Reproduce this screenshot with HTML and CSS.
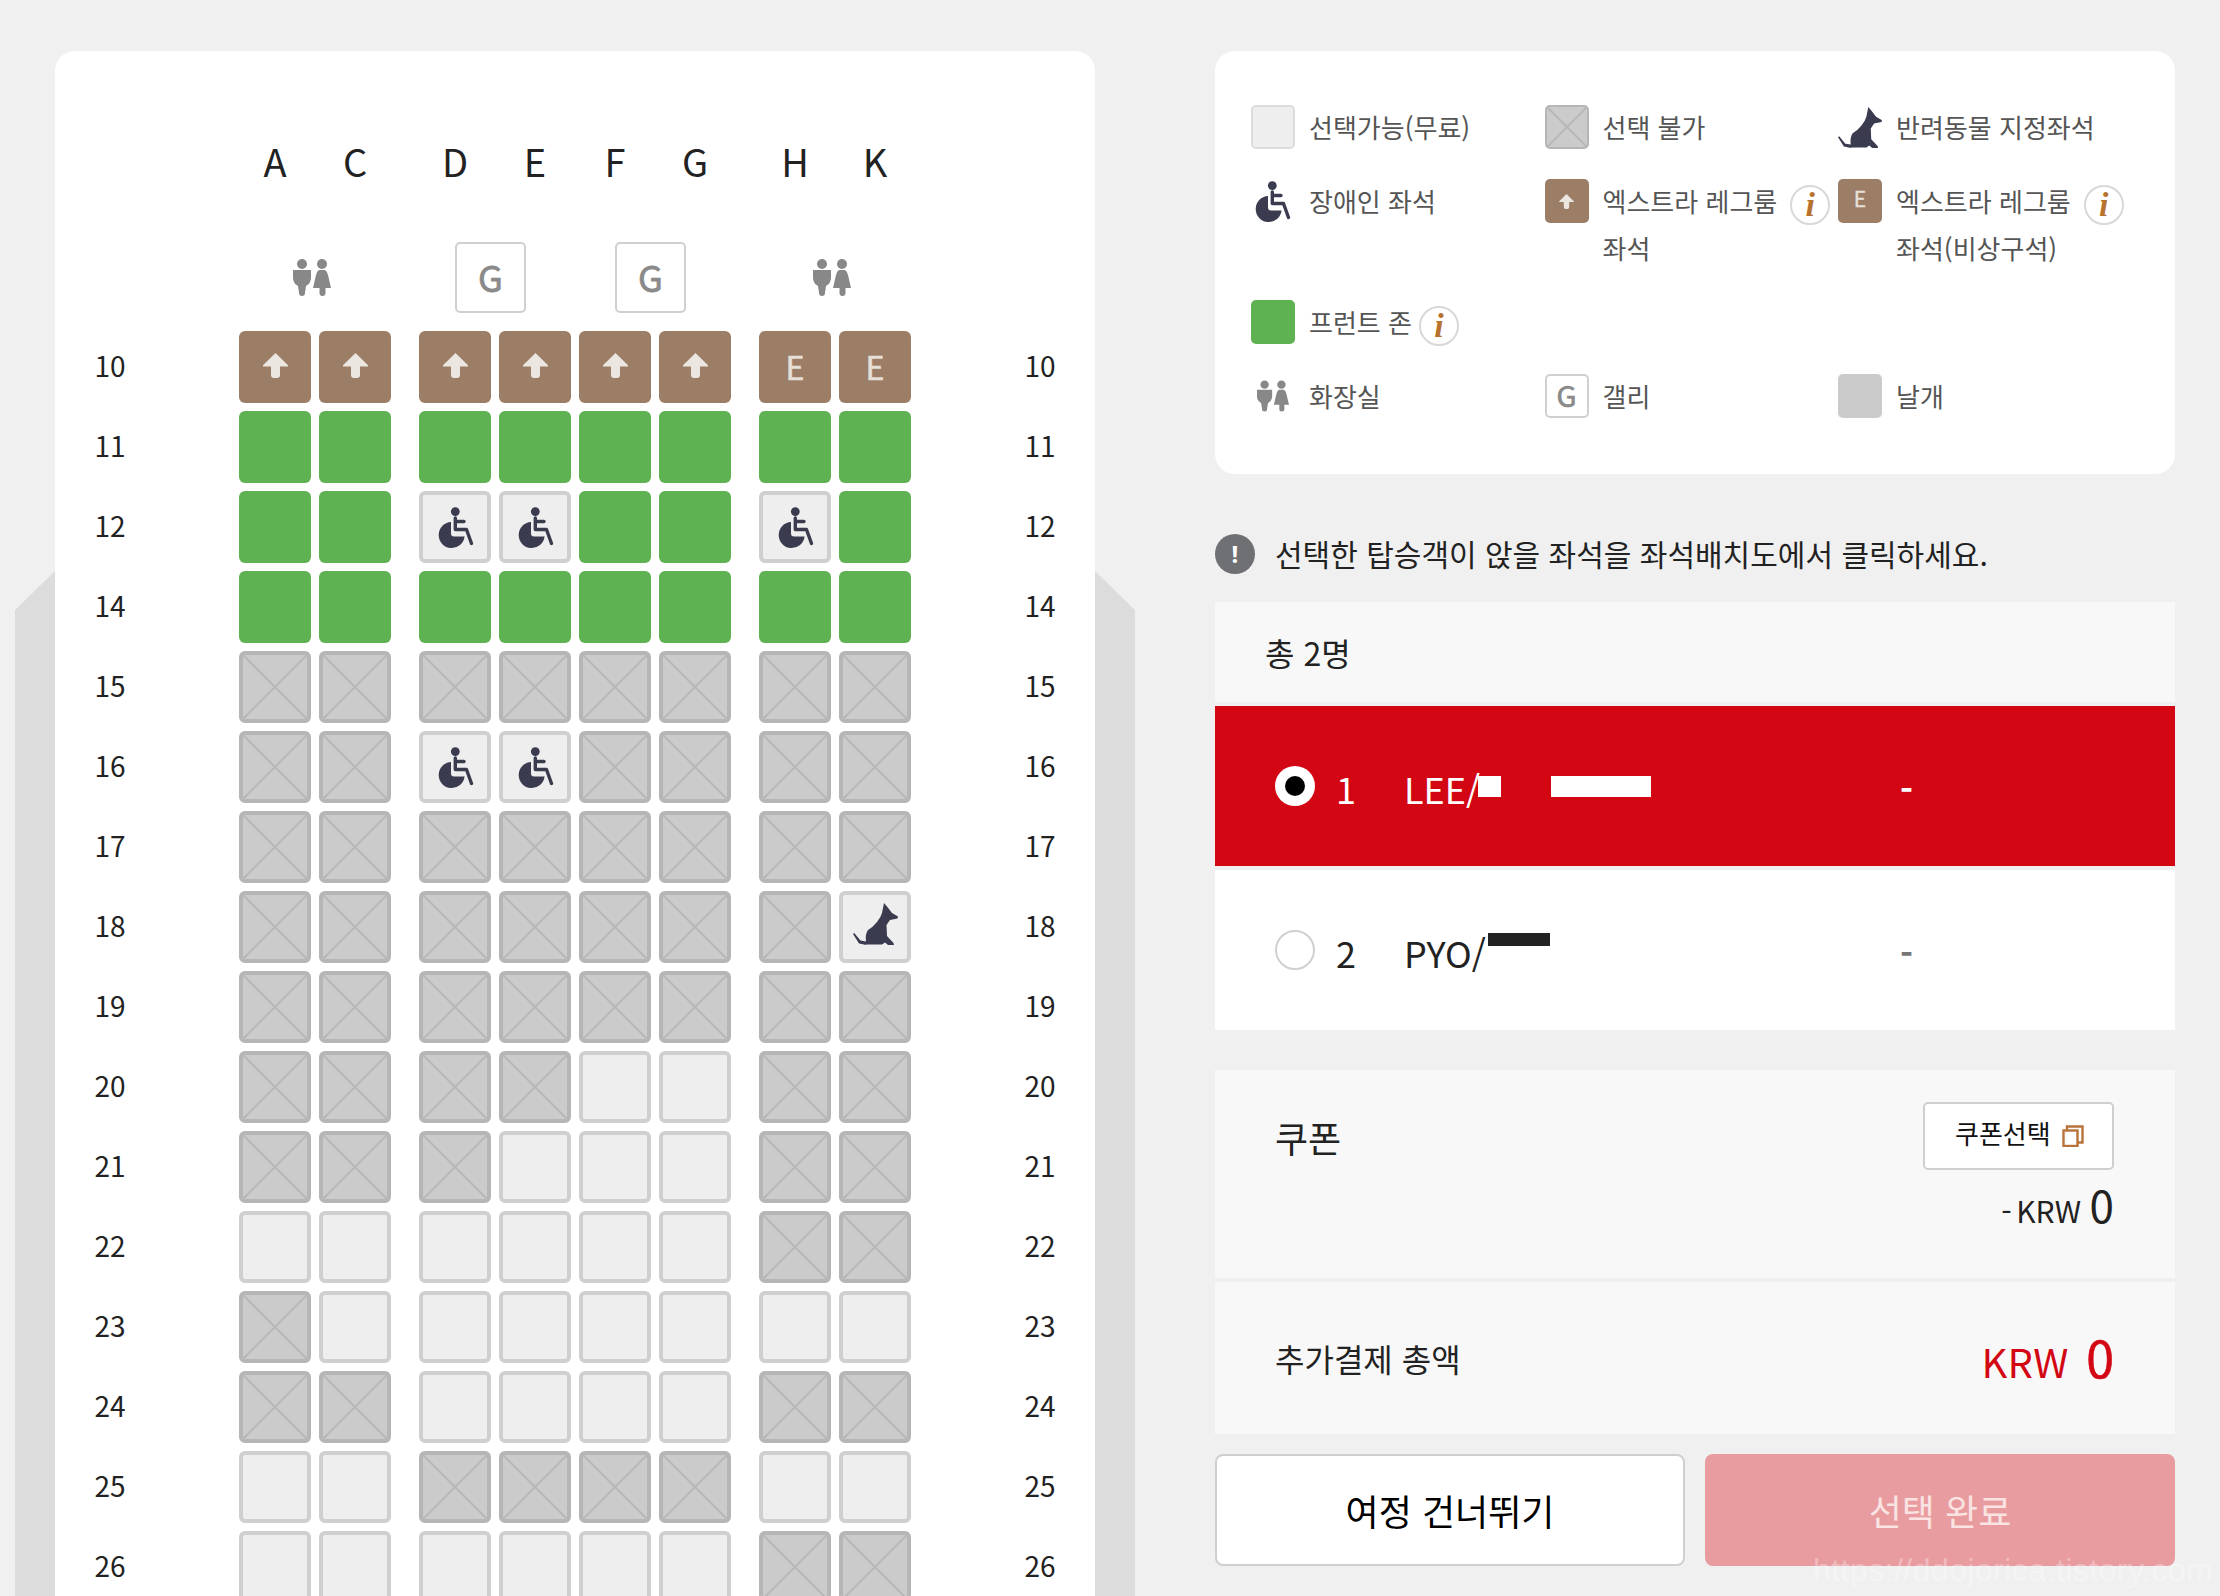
FILE: index.html
```html
<!DOCTYPE html>
<html lang="ko">
<head>
<meta charset="utf-8">
<title>좌석 선택</title>
<link rel="stylesheet" href="styles.css">
</head>
<body>
<svg class="defs" width="0" height="0" aria-hidden="true">
  <symbol id="arrow" viewBox="0 0 25 25"><path d="M12.5 0L25 12.3V13.4H17V22a3 3 0 0 1-3 3h-3a3 3 0 0 1-3-3V13.4H0V12.3z"/></symbol>
  <symbol id="wheel" viewBox="0 0 36 41">
    <circle cx="17.3" cy="4.6" r="4.4"/>
    <path d="M13 15A13 13 0 1 0 26.6 29.5H16a3 3 0 0 1-3-3z"/>
    <path d="M17.3 11V22.5H28.5L33.5 36.5M17.3 14.5H26" fill="none" stroke="currentColor" stroke-width="3.4" stroke-linecap="round" stroke-linejoin="round"/>
  </symbol>
  <symbol id="dog" viewBox="0 0 45 42"><path d="M31 0L34 3.5L39 10L45 13.5L44.5 15.5L37 17L33.5 22L34 33L40.5 40L41 42H35L32 39.5L29 41.5H14Q12 42 11 41.5L6 40.5L0 31L1.2 30L7.5 37.5L13 38.5Q12 31 15 27Q20 24 24 19Q28 14 29 10Z"/></symbol>
  <symbol id="toilet" viewBox="0 0 38 37">
    <circle cx="9" cy="5" r="5"/><circle cx="29" cy="5" r="5"/>
    <path d="M0 11H18V19Q18 24 13 27L12 34a3 3 0 0 1-6 0L5 27Q0 24 0 19Z"/>
    <path d="M26 11H32Q34 12 35 16L38 29H32.5V34a3 3 0 0 1-6 0V29H20L23 16Q24 12 26 11Z"/>
  </symbol>
</svg>
<div class="page">
  <section class="cabin">
    <div class="card">
      <div class="row letters">
        <div class="num"></div>
        <div class="seats">
          <div class="group"><div class="letter">A</div><div class="letter">C</div></div>
          <div class="group"><div class="letter">D</div><div class="letter">E</div><div class="letter">F</div><div class="letter">G</div></div>
          <div class="group"><div class="letter">H</div><div class="letter">K</div></div>
        </div>
        <div class="num"></div>
      </div>
      <div class="row facility">
        <div class="num"></div>
        <div class="seats">
          <div class="group fac-side"><svg class="toilet"><use href="#toilet"/></svg></div>
          <div class="group fac-mid"><div class="galley">G</div><div class="galley">G</div></div>
          <div class="group fac-side"><svg class="toilet"><use href="#toilet"/></svg></div>
        </div>
        <div class="num"></div>
      </div>
      <div class="rows">
        <div class="row"><div class="num">10</div><div class="seats">
          <div class="group"><div class="seat up"><svg class="ic-arrow"><use href="#arrow"/></svg></div><div class="seat up"><svg class="ic-arrow"><use href="#arrow"/></svg></div></div>
          <div class="group"><div class="seat up"><svg class="ic-arrow"><use href="#arrow"/></svg></div><div class="seat up"><svg class="ic-arrow"><use href="#arrow"/></svg></div><div class="seat up"><svg class="ic-arrow"><use href="#arrow"/></svg></div><div class="seat up"><svg class="ic-arrow"><use href="#arrow"/></svg></div></div>
          <div class="group"><div class="seat up">E</div><div class="seat up">E</div></div>
        </div><div class="num">10</div></div>
        <div class="row"><div class="num">11</div><div class="seats">
          <div class="group"><div class="seat front"></div><div class="seat front"></div></div>
          <div class="group"><div class="seat front"></div><div class="seat front"></div><div class="seat front"></div><div class="seat front"></div></div>
          <div class="group"><div class="seat front"></div><div class="seat front"></div></div>
        </div><div class="num">11</div></div>
        <div class="row"><div class="num">12</div><div class="seats">
          <div class="group"><div class="seat front"></div><div class="seat front"></div></div>
          <div class="group"><div class="seat free"><svg class="ic-wheel"><use href="#wheel"/></svg></div><div class="seat free"><svg class="ic-wheel"><use href="#wheel"/></svg></div><div class="seat front"></div><div class="seat front"></div></div>
          <div class="group"><div class="seat free"><svg class="ic-wheel"><use href="#wheel"/></svg></div><div class="seat front"></div></div>
        </div><div class="num">12</div></div>
        <div class="row"><div class="num">14</div><div class="seats">
          <div class="group"><div class="seat front"></div><div class="seat front"></div></div>
          <div class="group"><div class="seat front"></div><div class="seat front"></div><div class="seat front"></div><div class="seat front"></div></div>
          <div class="group"><div class="seat front"></div><div class="seat front"></div></div>
        </div><div class="num">14</div></div>
        <div class="row"><div class="num">15</div><div class="seats">
          <div class="group"><div class="seat no"></div><div class="seat no"></div></div>
          <div class="group"><div class="seat no"></div><div class="seat no"></div><div class="seat no"></div><div class="seat no"></div></div>
          <div class="group"><div class="seat no"></div><div class="seat no"></div></div>
        </div><div class="num">15</div></div>
        <div class="row"><div class="num">16</div><div class="seats">
          <div class="group"><div class="seat no"></div><div class="seat no"></div></div>
          <div class="group"><div class="seat free"><svg class="ic-wheel"><use href="#wheel"/></svg></div><div class="seat free"><svg class="ic-wheel"><use href="#wheel"/></svg></div><div class="seat no"></div><div class="seat no"></div></div>
          <div class="group"><div class="seat no"></div><div class="seat no"></div></div>
        </div><div class="num">16</div></div>
        <div class="row"><div class="num">17</div><div class="seats">
          <div class="group"><div class="seat no"></div><div class="seat no"></div></div>
          <div class="group"><div class="seat no"></div><div class="seat no"></div><div class="seat no"></div><div class="seat no"></div></div>
          <div class="group"><div class="seat no"></div><div class="seat no"></div></div>
        </div><div class="num">17</div></div>
        <div class="row"><div class="num">18</div><div class="seats">
          <div class="group"><div class="seat no"></div><div class="seat no"></div></div>
          <div class="group"><div class="seat no"></div><div class="seat no"></div><div class="seat no"></div><div class="seat no"></div></div>
          <div class="group"><div class="seat no"></div><div class="seat free"><svg class="ic-dog"><use href="#dog"/></svg></div></div>
        </div><div class="num">18</div></div>
        <div class="row"><div class="num">19</div><div class="seats">
          <div class="group"><div class="seat no"></div><div class="seat no"></div></div>
          <div class="group"><div class="seat no"></div><div class="seat no"></div><div class="seat no"></div><div class="seat no"></div></div>
          <div class="group"><div class="seat no"></div><div class="seat no"></div></div>
        </div><div class="num">19</div></div>
        <div class="row"><div class="num">20</div><div class="seats">
          <div class="group"><div class="seat no"></div><div class="seat no"></div></div>
          <div class="group"><div class="seat no"></div><div class="seat no"></div><div class="seat free"></div><div class="seat free"></div></div>
          <div class="group"><div class="seat no"></div><div class="seat no"></div></div>
        </div><div class="num">20</div></div>
        <div class="row"><div class="num">21</div><div class="seats">
          <div class="group"><div class="seat no"></div><div class="seat no"></div></div>
          <div class="group"><div class="seat no"></div><div class="seat free"></div><div class="seat free"></div><div class="seat free"></div></div>
          <div class="group"><div class="seat no"></div><div class="seat no"></div></div>
        </div><div class="num">21</div></div>
        <div class="row"><div class="num">22</div><div class="seats">
          <div class="group"><div class="seat free"></div><div class="seat free"></div></div>
          <div class="group"><div class="seat free"></div><div class="seat free"></div><div class="seat free"></div><div class="seat free"></div></div>
          <div class="group"><div class="seat no"></div><div class="seat no"></div></div>
        </div><div class="num">22</div></div>
        <div class="row"><div class="num">23</div><div class="seats">
          <div class="group"><div class="seat no"></div><div class="seat free"></div></div>
          <div class="group"><div class="seat free"></div><div class="seat free"></div><div class="seat free"></div><div class="seat free"></div></div>
          <div class="group"><div class="seat free"></div><div class="seat free"></div></div>
        </div><div class="num">23</div></div>
        <div class="row"><div class="num">24</div><div class="seats">
          <div class="group"><div class="seat no"></div><div class="seat no"></div></div>
          <div class="group"><div class="seat free"></div><div class="seat free"></div><div class="seat free"></div><div class="seat free"></div></div>
          <div class="group"><div class="seat no"></div><div class="seat no"></div></div>
        </div><div class="num">24</div></div>
        <div class="row"><div class="num">25</div><div class="seats">
          <div class="group"><div class="seat free"></div><div class="seat free"></div></div>
          <div class="group"><div class="seat no"></div><div class="seat no"></div><div class="seat no"></div><div class="seat no"></div></div>
          <div class="group"><div class="seat free"></div><div class="seat free"></div></div>
        </div><div class="num">25</div></div>
        <div class="row"><div class="num">26</div><div class="seats">
          <div class="group"><div class="seat free"></div><div class="seat free"></div></div>
          <div class="group"><div class="seat free"></div><div class="seat free"></div><div class="seat free"></div><div class="seat free"></div></div>
          <div class="group"><div class="seat no"></div><div class="seat no"></div></div>
        </div><div class="num">26</div></div>
      </div>
    </div>
  </section>

  <section class="side">
    <div class="legend">
      <div class="item"><div class="sw free"></div><div class="label">선택가능(무료)</div></div>
      <div class="item"><div class="sw no"></div><div class="label">선택 불가</div></div>
      <div class="item"><div class="sw plain"><svg class="lg-dog"><use href="#dog"/></svg></div><div class="label">반려동물 지정좌석</div></div>

      <div class="item"><div class="sw plain"><svg class="lg-wheel"><use href="#wheel"/></svg></div><div class="label">장애인 좌석</div></div>
      <div class="item"><div class="sw up"><svg class="lg-arrow"><use href="#arrow"/></svg></div><div class="label">엑스트라 레그룸<span class="info wide">i</span><br>좌석</div></div>
      <div class="item"><div class="sw up e">E</div><div class="label">엑스트라 레그룸<span class="info wide">i</span><br>좌석(비상구석)</div></div>

      <div class="item"><div class="sw front"></div><div class="label">프런트 존<span class="info">i</span></div></div>
      <div class="item"></div>
      <div class="item"></div>

      <div class="item"><div class="sw plain"><svg class="lg-toilet"><use href="#toilet"/></svg></div><div class="label">화장실</div></div>
      <div class="item"><div class="sw galley-sw">G</div><div class="label">갤리</div></div>
      <div class="item"><div class="sw wing"></div><div class="label">날개</div></div>
    </div>

    <div class="notice"><span class="bang">!</span><span class="notice-text">선택한 탑승객이 앉을 좌석을 좌석배치도에서 클릭하세요.</span></div>

    <div class="total-pax">총 2명</div>

    <div class="pax on">
      <span class="radio"></span>
      <span class="no">1</span>
      <div class="name"><span class="nm">LEE/</span><span class="bar b1"></span><span class="bar b2"></span></div>
      <span class="dash">-</span>
    </div>
    <div class="pax">
      <span class="radio"></span>
      <span class="no">2</span>
      <div class="name"><span class="nm">PYO/</span><span class="bar b3"></span></div>
      <span class="dash">-</span>
    </div>

    <div class="coupon">
      <div class="coupon-top">
        <span class="coupon-title">쿠폰</span>
        <button class="coupon-btn" type="button">쿠폰선택<svg class="copy" viewBox="0 0 22 22"><path d="M5 5V1.5H20.5V17.5H16" fill="none"/><rect x="1.5" y="5.5" width="14" height="15.5" fill="none"/></svg></button>
      </div>
      <div class="coupon-amt"><span class="minus">-</span> KRW <b>0</b></div>
    </div>

    <div class="grand">
      <span class="grand-label">추가결제 총액</span>
      <span class="grand-amt">KRW<b>0</b></span>
    </div>

    <div class="actions">
      <button class="btn skip" type="button">여정 건너뛰기</button>
      <button class="btn done" type="button">선택 완료</button>
    </div>
  </section>
</div>
<div class="watermark">https://ddojorica.tistory.com</div>
</body>
</html>
```

FILE: styles.css
```css
* { box-sizing: border-box; }
html, body { margin: 0; padding: 0; }
body {
  position: relative;
  width: 2220px;
  height: 1596px;
  overflow: hidden;
  background: #f0f0f0;
  color: #222;
  font-family: "Noto Sans CJK KR", "Noto Sans", sans-serif;
}
.defs { position: absolute; }
.page { display: flex; padding: 51px 0 0 15px; align-items: flex-start; }

/* cabin */
.cabin { position: relative; width: 1120px; height: 1545px; padding: 0 40px; flex: none; }
.cabin::before {
  content: "";
  position: absolute;
  inset: 0;
  background: #dcdcdc;
  clip-path: polygon(0 559px, 40px 520px, 1080px 520px, 1120px 559px, 1120px 100%, 0 100%);
}
.card {
  position: relative;
  width: 1040px;
  height: 1600px;
  padding-top: 76px;
  background: #fff;
  border-radius: 20px 20px 0 0;
}
.row { display: flex; height: 72px; align-items: center; }
.num { width: 110px; padding-bottom: 3px; text-align: center; font-size: 28px; line-height: 69px; color: #222; }
.seats { display: flex; gap: 28px; margin: 0 74px; }
.group { display: flex; gap: 8px; height: 72px; align-items: center; }
.letter { width: 72px; padding-bottom: 5px; text-align: center; font-size: 38px; line-height: 67px; color: #222; }
.facility { margin: 42px 0 18px; }
.fac-side { width: 152px; padding-left: 54px; }
.fac-mid { width: 312px; padding-left: 36px; gap: 89px; }
.toilet { width: 38px; height: 37px; fill: #888; }
.galley {
  width: 71px;
  height: 71px;
  border: 2px solid #d0d0d0;
  border-radius: 5px;
  background: #fff;
  color: #8a8a8a;
  font-size: 36px;
  -webkit-text-stroke: 0.8px #8a8a8a;
  line-height: 64px;
  text-align: center;
}
.rows { display: flex; flex-direction: column; gap: 8px; }
.seat {
  width: 72px;
  height: 72px;
  border-radius: 6px;
  display: flex;
  align-items: center;
  justify-content: center;
  flex: none;
}
.seat.up { padding-bottom: 3px; background: #9c7e66; color: #e6dfd8; font-size: 32px; -webkit-text-stroke: 0.6px #e6dfd8; line-height: 1; fill: #ece6e0; }
.seat.front { background: #5fb251; }
.seat.free { background: #eee; border: 4px solid #cfcfcf; color: #3a3b4e; fill: #3a3b4e; }
.no {
  background-color: #cbcbcb;
  border: 4px solid #b6b6b6;
  background-image:
    linear-gradient(to top right, transparent calc(50% - 1.3px), #b8b8b8 calc(50% - 1.3px), #b8b8b8 calc(50% + 1.3px), transparent calc(50% + 1.3px)),
    linear-gradient(to bottom right, transparent calc(50% - 1.3px), #b8b8b8 calc(50% - 1.3px), #b8b8b8 calc(50% + 1.3px), transparent calc(50% + 1.3px));
}
.ic-arrow { width: 25px; height: 25px; }
.ic-wheel { width: 36px; height: 41px; margin-left: 2px; }
.ic-dog { width: 45px; height: 42px; margin-bottom: 6px; flex: none; }

/* right column */
.side { width: 960px; margin-left: 80px; flex: none; }
.legend {
  display: grid;
  grid-template-columns: repeat(3, 293.5px);
  grid-auto-rows: min-content;
  row-gap: 27px;
  height: 423px;
  padding: 54px 0 0 36px;
  background: #fff;
  border-radius: 20px;
}
.item { display: flex; gap: 14px; align-items: flex-start; min-height: 47px; }
.label { margin: -2px 0 2px; font-size: 26px; line-height: 47px; color: #555; white-space: nowrap; }
.sw {
  width: 44px;
  height: 44px;
  border-radius: 5px;
  flex: none;
  display: flex;
  align-items: center;
  justify-content: center;
}
.sw.free { background: #eee; border: 2px solid #dcdcdc; }
.sw.no { border-width: 2px; }
.sw.plain { color: #3a3b4e; fill: #3a3b4e; }
.sw.up { background: #9c7e66; fill: #ece6e0; color: #e6dfd8; }
.sw.e { font-size: 21px; line-height: 1; padding-bottom: 5px; -webkit-text-stroke: 0.4px #e6dfd8; }
.sw.front { background: #5fb251; }
.sw.wing { background: #cbcbcb; }
.galley-sw { background: #fff; border: 2px solid #d0d0d0; color: #8a8a8a; font-size: 29px; -webkit-text-stroke: 0.7px #8a8a8a; line-height: 1; padding-bottom: 3px; }
.lg-dog { width: 44px; height: 43px; flex: none; }
.lg-wheel { width: 36px; height: 41px; }
.lg-arrow { width: 15px; height: 15px; }
.lg-toilet { width: 32px; height: 32px; fill: #888; }
.info {
  display: inline-flex;
  align-items: center;
  justify-content: center;
  width: 40px;
  height: 40px;
  margin: -12px 0 -12px 7px;
  border: 2px solid #d8d8d8;
  border-radius: 50%;
  background: #fff;
  color: #b8722e;
  font: italic 700 34px/1 "Liberation Serif", serif;
  vertical-align: middle;
}
.info.wide { margin-left: 13px; }

.notice { display: flex; align-items: center; gap: 20px; height: 40px; margin: 60px 0 28px; font-size: 30px; color: #222; }
.notice-text { padding-bottom: 3px; }
.bang {
  width: 40px;
  height: 40px;
  border-radius: 50%;
  background: #6f7074;
  color: #fff;
  font: 700 24px/40px "Noto Sans", sans-serif;
  text-align: center;
  flex: none;
}
.total-pax { height: 100px; padding-left: 50px; background: #f8f8f8; font-size: 32px; line-height: 100px; color: #222; }

.pax { display: flex; align-items: center; height: 160px; margin-top: 4px; padding-left: 60px; background: #fff; color: #222; }
.pax.on { background: #d30713; color: #fff; }
.radio { width: 40px; height: 40px; border-radius: 50%; background: #fff; border: 2px solid #d0d0d0; flex: none; display: flex; align-items: center; justify-content: center; }
.on .radio { border: none; }
.on .radio::after { content: ""; width: 20px; height: 20px; border-radius: 50%; background: #000; }
.pax .no { all: unset; width: 68px; margin-left: 21px; font-size: 36px; line-height: 44px; padding-top: 4px; }
.name { display: flex; align-items: center; width: 496px; font-size: 36px; }
.nm { line-height: 44px; padding-top: 4px; }
.bar { display: block; }
.b1 { width: 23px; height: 21px; background: #fff; margin-left: -2px; }
.b2 { width: 100px; height: 21px; background: #fff; margin-left: 50px; }
.b3 { width: 62px; height: 13px; background: #222; margin: 0 0 21px 2px; }
.dash { font-size: 35px; font-weight: 700; line-height: 44px; padding-top: 4px; color: inherit; }
.pax:not(.on) .dash { color: #777; }

.coupon { height: 208px; margin-top: 40px; padding: 32px 61px 0 60px; background: #f8f8f8; }
.coupon-top { display: flex; justify-content: space-between; align-items: center; }
.coupon-title { font-size: 36px; line-height: 44px; padding-top: 1px; color: #222; }
.coupon-btn {
  display: flex;
  align-items: center;
  gap: 11px;
  width: 191px;
  height: 68px;
  padding: 0 0 6px 30px;
  border: 2px solid #cfcfcf;
  border-radius: 5px;
  background: #fff;
  color: #111;
  font: 26px/1 "Noto Sans CJK KR", sans-serif;
}
.copy { width: 22px; height: 22px; margin-top: 5px; stroke: #b8733a; stroke-width: 2.4; }
.coupon-amt { margin-top: 6px; text-align: right; font-size: 30px; line-height: 56px; color: #222; }
.coupon-amt b { font-weight: 400; font-size: 44px; }
.minus { margin-right: -4px; }

.grand { display: flex; justify-content: space-between; align-items: center; height: 152px; margin-top: 4px; padding: 0 61px 0 60px; background: #f8f8f8; }
.grand-label { font-size: 32px; color: #222; }
.grand-amt { display: flex; align-items: baseline; gap: 18px; color: #d30713; font-size: 40px; line-height: 60px; }
.grand-amt b { font-weight: 400; font-size: 50px; -webkit-text-stroke: 0.6px #d30713; }

.actions { display: flex; justify-content: space-between; margin-top: 20px; }
.btn { width: 470px; height: 112px; border-radius: 8px; font: 36px/1 "Noto Sans CJK KR", sans-serif; }
.skip { background: #fff; border: 2px solid #cfcfcf; color: #000; }
.done { background: #e99c9f; border: none; color: #f9e3e3; }

.watermark {
  position: absolute;
  left: 1813px;
  top: 1548px;
  white-space: nowrap;
  font: 32px/44px "Liberation Sans", sans-serif;
  letter-spacing: 0.45px;
  color: rgba(255, 255, 255, 0.32);
}
```
